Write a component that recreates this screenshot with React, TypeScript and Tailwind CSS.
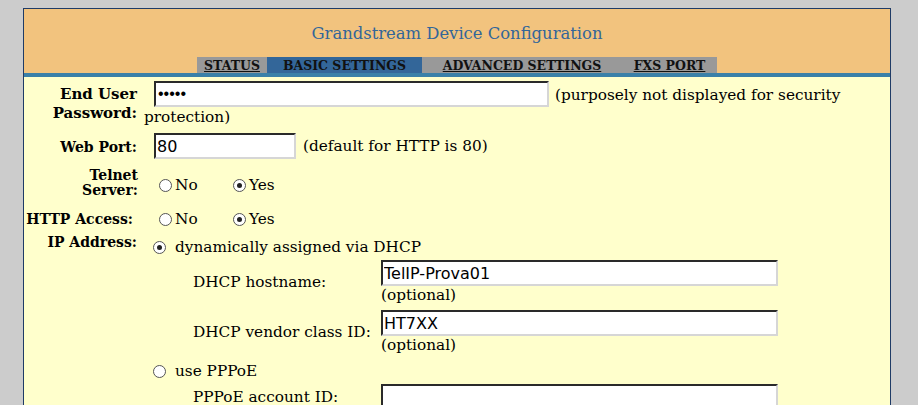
import React from "react";

type Tab = { label: string; width: string; active?: boolean };

const tabs: Tab[] = [
  { label: "STATUS", width: "w-[70px]" },
  { label: "BASIC SETTINGS", width: "w-[155px]", active: true },
  { label: "ADVANCED SETTINGS", width: "w-[200px]" },
  { label: "FXS PORT", width: "w-[95px]" },
];

function Radio({ checked }: { checked?: boolean }) {
  return (
    <span className="inline-flex h-[13px] w-[13px] shrink-0 items-center justify-center rounded-full border border-[#555] bg-white">
      {checked && <span className="h-[5px] w-[5px] rounded-full bg-[#222]" />}
    </span>
  );
}

function YesNo({ yes }: { yes: boolean }) {
  return (
    <div className="flex h-[18px] items-center pl-[15px] text-[15.3px]">
      <label className="flex w-[74px] items-center gap-[3px]">
        <Radio checked={!yes} />
        No
      </label>
      <label className="flex items-center gap-[3px]">
        <Radio checked={yes} />
        Yes
      </label>
    </div>
  );
}

function Field({ value, className }: { value: string; className: string }) {
  return (
    <input
      type="text"
      defaultValue={value}
      readOnly
      className={`h-[26px] shrink-0 border-2 border-t-[#2a2a2a] border-l-[#2a2a2a] border-r-[#d6d6d6] border-b-[#d6d6d6] bg-white px-[1px] font-['DejaVu_Sans','Liberation_Sans',sans-serif] text-[16px] text-black outline-none ${className}`}
    />
  );
}

function SubRow({ label, value, optional }: { label: string; value: string; optional?: boolean }) {
  return (
    <div className="flex items-center">
      <div className="w-[237px] shrink-0 whitespace-nowrap pl-[49px] text-[15.3px]">{label}</div>
      <div className="flex flex-col">
        <Field value={value} className="w-[397px]" />
        {optional && <div className="text-[15.3px] leading-[18px]">(optional)</div>}
      </div>
    </div>
  );
}

export default function App() {
  return (
    <div className="min-h-screen bg-[#cccccc] pt-[8px] font-['DejaVu_Serif','Liberation_Serif',serif] text-black">
      <div className="ml-[23px] w-[868px] border border-[#1f3b66] bg-[#ffffcc]">
        {/* header */}
        <div className="flex h-[64px] flex-col items-center bg-[#f2c37e] pt-[15px]">
          <h1 className="text-[16.4px] font-normal leading-[19px] text-[#336699]">
            Grandstream Device Configuration
          </h1>
          <div className="mt-[14px] flex h-[16px]">
            {tabs.map((t) => (
              <div
                key={t.label}
                className={`${t.width} flex items-center justify-center pt-[1px] text-[12.5px] font-bold leading-[16px] text-[#111] ${
                  t.active ? "bg-[#336699]" : "bg-[#999999] underline"
                }`}
              >
                {t.label}
              </div>
            ))}
          </div>
        </div>
        <div className="h-[4px] bg-[#3a80a8]" />

        {/* form */}
        <div className="pb-[40px] pt-[4px]">
          <div className="flex items-start gap-[4px]">
            <div className="w-[116px] shrink-0 pr-[3px] pt-[4px] text-right text-[15px] font-bold leading-[19px]">
              End User
              <br />
              Password:
            </div>
            <div className="flex flex-col">
              <div className="flex h-[26px] items-center">
                <input
                  type="password"
                  defaultValue="12345"
                  readOnly
                  className="ml-[10px] h-[26px] w-[395px] shrink-0 border-2 border-t-[#2a2a2a] border-l-[#2a2a2a] border-r-[#d6d6d6] border-b-[#d6d6d6] bg-white px-[2px] font-['Liberation_Sans',sans-serif] text-[16px] text-black outline-none"
                />
                <span className="ml-[6px] pt-[2px] text-[15.3px]">(purposely not displayed for security</span>
              </div>
              <div className="mt-[1px] text-[15.3px] leading-[18px]">protection)</div>
            </div>
          </div>

          <div className="mt-[7px] flex items-center gap-[4px]">
            <div className="w-[116px] shrink-0 pr-[3px] pt-[2px] text-right text-[14px] font-bold leading-[15px]">Web Port:</div>
            <div className="flex items-center">
              <Field value="80" className="ml-[10px] w-[142px]" />
              <span className="ml-[7px] pt-[1px] text-[15.3px]">(default for HTTP is 80)</span>
            </div>
          </div>

          <div className="mt-[7px] flex items-start gap-[4px]">
            <div className="w-[116px] shrink-0 pr-[2px] pt-[2px] text-right text-[14px] font-bold leading-[15px]">
              Telnet
              <br />
              Server:
            </div>
            <div className="pt-[10px]">
              <YesNo yes />
            </div>
          </div>

          <div className="mt-[12px] flex items-center gap-[4px]">
            <div className="w-[116px] shrink-0 whitespace-nowrap pr-[7px] text-right text-[14px] font-bold leading-[15px]">HTTP Access:</div>
            <YesNo yes />
          </div>

          <div className="mt-[7px] flex items-start gap-[4px]">
            <div className="w-[116px] shrink-0 pr-[3px] text-right text-[14px] font-bold leading-[15px]">IP Address:</div>
            <div className="flex flex-col pt-[3px]">
              <label className="flex h-[18px] items-center gap-[9px] pl-[9px] text-[15.3px]">
                <Radio checked />
                dynamically assigned via DHCP
              </label>
              <div className="mt-[4px] flex flex-col gap-[6px]">
                <SubRow label="DHCP hostname:" value="TelIP-Prova01" optional />
                <SubRow label="DHCP vendor class ID:" value="HT7XX" optional />
              </div>
              <label className="mt-[8px] flex h-[18px] items-center gap-[9px] pl-[9px] text-[15.3px]">
                <Radio />
                use PPPoE
              </label>
              <div className="mt-[4px] flex flex-col gap-[6px]">
                <SubRow label="PPPoE account ID:" value="" />
                <SubRow label="PPPoE password:" value="" />
              </div>
            </div>
          </div>
        </div>
      </div>
    </div>
  );
}
